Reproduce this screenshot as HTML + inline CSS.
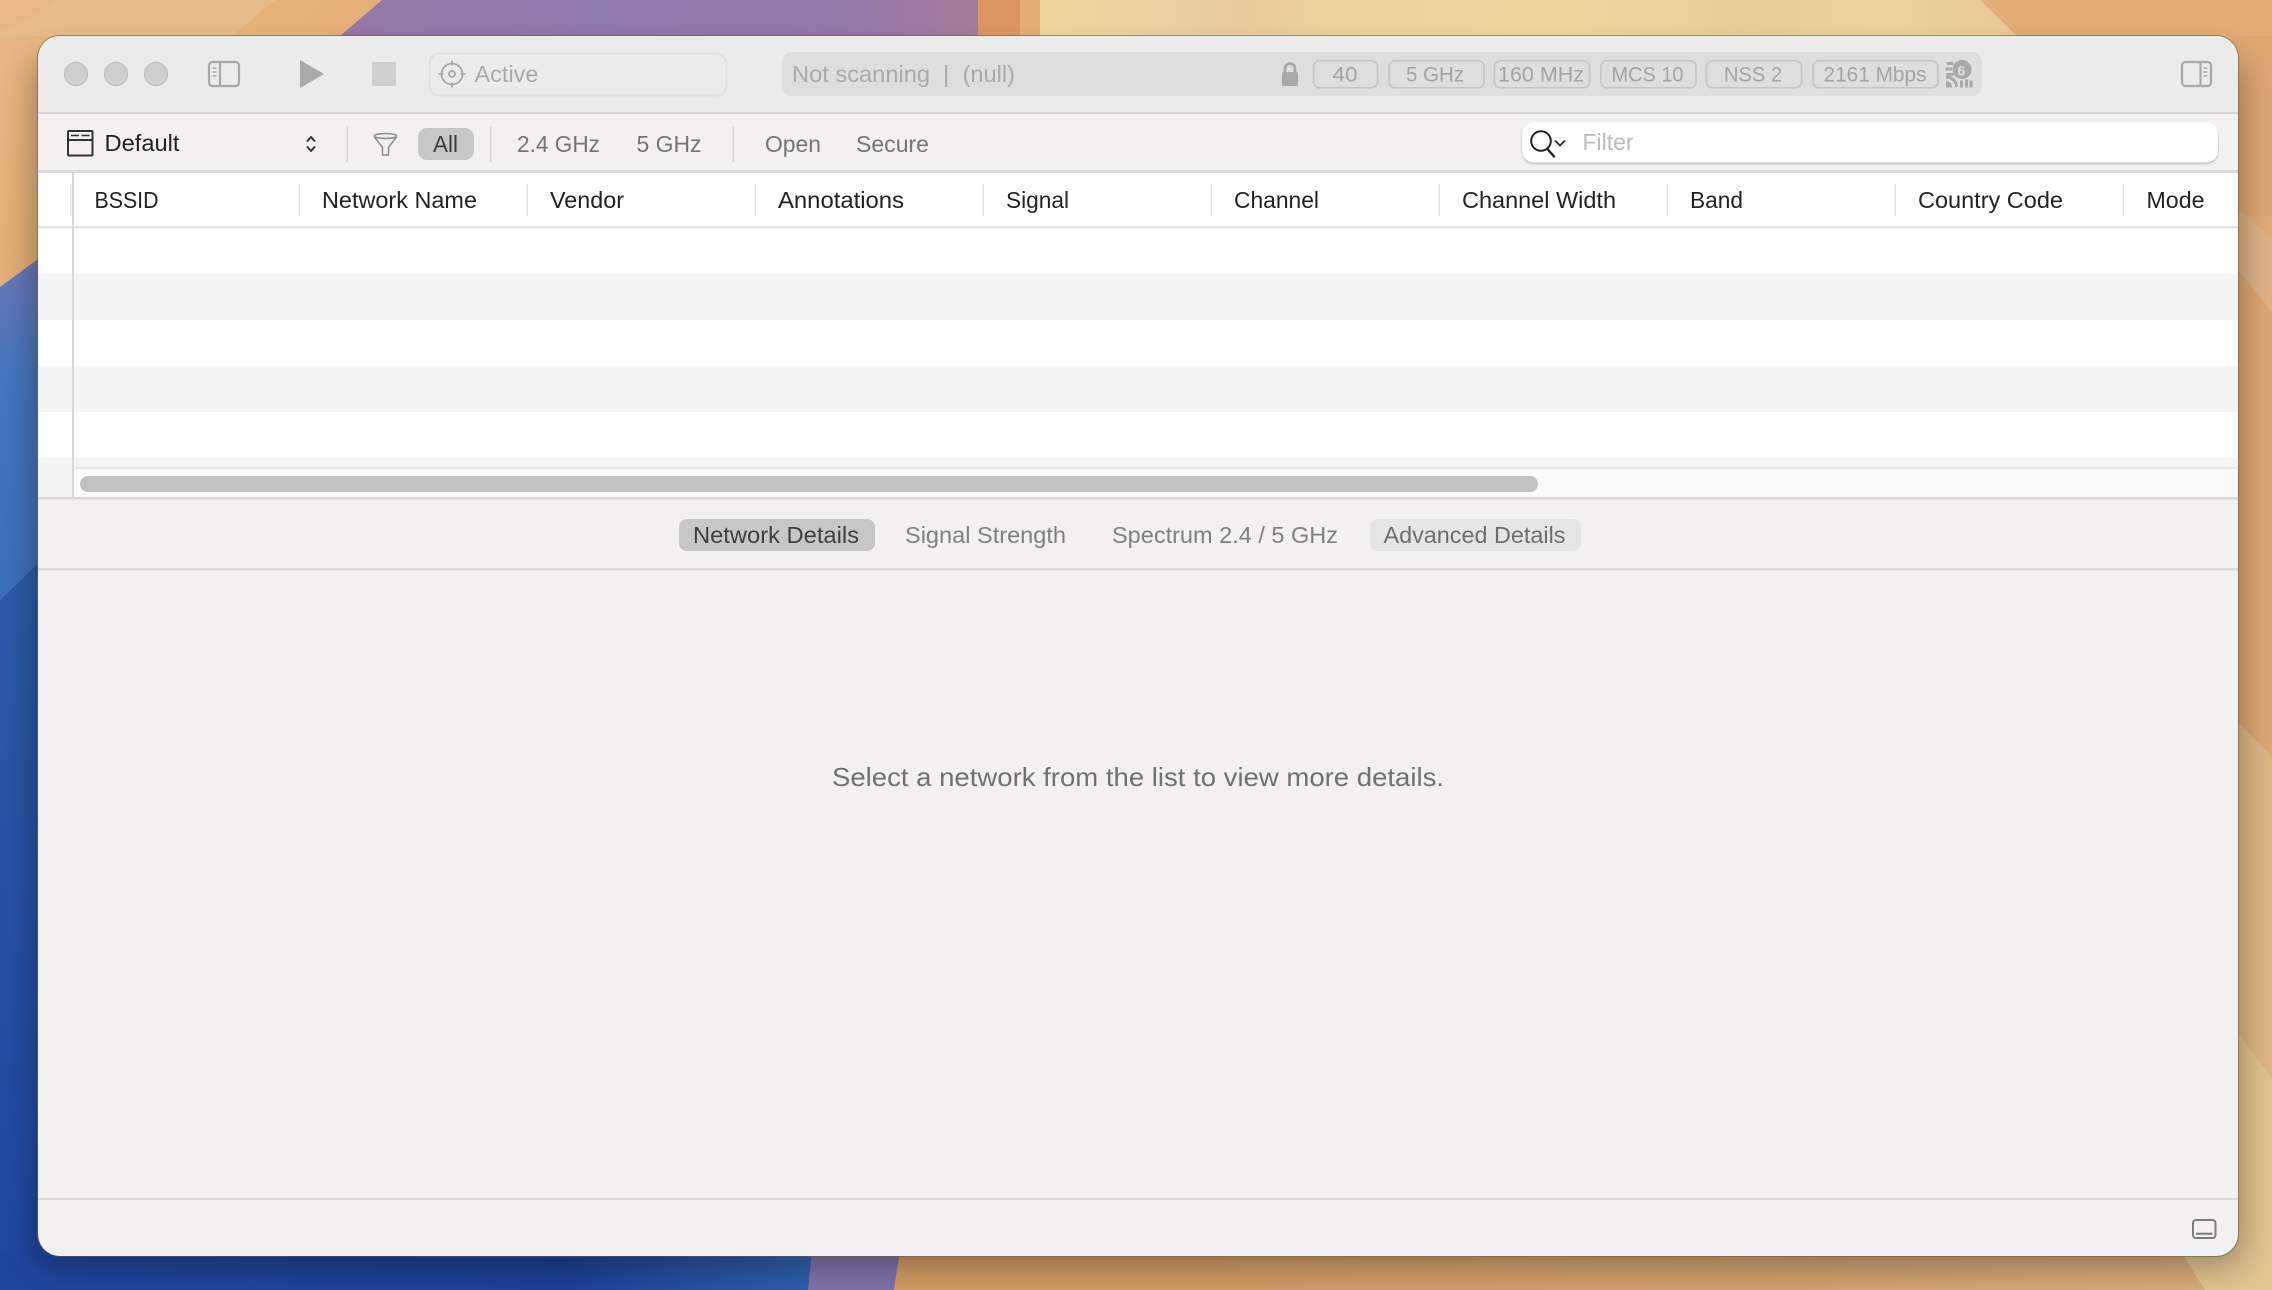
<!DOCTYPE html>
<html><head><meta charset="utf-8"><style>
html,body{margin:0;padding:0;width:2272px;height:1290px;overflow:hidden;background:#e3ad72}
svg{display:block}
text{font-family:"Liberation Sans",sans-serif;font-size:23px;fill:#222}
.g{fill:#757575}.d{fill:#aaa}.b{font-size:21.500px;fill:#a4a4a4}
</style></head><body>
<svg xmlns="http://www.w3.org/2000/svg" width="2272" height="1290" viewBox="0 0 2272 1290">
<defs>
<linearGradient id="o1" x1="0" y1="0" x2="1" y2="1"><stop offset="0" stop-color="#e9b983"/><stop offset="1" stop-color="#dfa56c"/></linearGradient>
<linearGradient id="bl1" x1="0" y1="0" x2="0" y2="1"><stop offset="0" stop-color="#6f78b6"/><stop offset=".35" stop-color="#4577be"/><stop offset="1" stop-color="#3c70bc"/></linearGradient>
<linearGradient id="bl2" x1="0" y1="0" x2="0" y2="1"><stop offset="0" stop-color="#2e5caa"/><stop offset="1" stop-color="#1e479f"/></linearGradient>
<linearGradient id="bl3" x1="0" y1="0" x2="1" y2="0"><stop offset="0" stop-color="#1f469f"/><stop offset=".7" stop-color="#1d4196"/><stop offset="1" stop-color="#2f60aa"/></linearGradient>
<linearGradient id="pu" x1="0" y1="0" x2="1" y2="0"><stop offset="0" stop-color="#9579a8"/><stop offset=".4" stop-color="#8d78ac"/><stop offset=".8" stop-color="#9378aa"/><stop offset="1" stop-color="#a67c98"/></linearGradient>
<linearGradient id="ye" x1="0" y1="0" x2="1" y2="0">
<stop offset="0" stop-color="#edd69c"/><stop offset=".13" stop-color="#ebd09f"/><stop offset=".2" stop-color="#e9ca9b"/><stop offset=".3" stop-color="#ecd29c"/><stop offset=".52" stop-color="#edd69c"/><stop offset=".7" stop-color="#e9cd99"/><stop offset=".85" stop-color="#ebd19c"/><stop offset="1" stop-color="#e8c892"/></linearGradient>
<linearGradient id="br" x1="0" y1="0" x2="1" y2="0"><stop offset="0" stop-color="#d39c65"/><stop offset=".55" stop-color="#d2a26f"/><stop offset="1" stop-color="#d8ad7c"/></linearGradient>
<filter id="sh" x="-5%" y="-5%" width="110%" height="110%"><feGaussianBlur stdDeviation="16"/></filter>
<filter id="fs" x="-5%" y="-20%" width="110%" height="140%"><feGaussianBlur stdDeviation="1"/></filter>
<clipPath id="win"><rect x="38" y="36" width="2200" height="1220" rx="22"/></clipPath>
</defs>

<!-- wallpaper -->
<rect width="2272" height="1290" fill="#e3ab72"/>
<polygon points="0,0 382,0 340,40 0,300" fill="url(#o1)"/>
<polygon points="58,0 275,0 232,36 0,36 0,33" fill="#e7bc88"/>
<polygon points="340,36 382,0 978,0 978,40" fill="url(#pu)"/>
<rect x="978" y="0" width="42" height="40" fill="#dc9662"/>
<rect x="1020" y="0" width="20" height="40" fill="#e4ae76"/>
<rect x="1040" y="0" width="1000" height="40" fill="url(#ye)"/>
<polygon points="1980,0 2272,0 2272,238 2232,210 2238,40 2021,40" fill="#e2ad76"/>
<rect x="2232" y="36" width="40" height="180" fill="#dfa873"/>
<polygon points="2232,205 2272,238 2272,312 2232,263" fill="#e0b386"/>
<polygon points="2232,263 2272,312 2272,757 2232,716" fill="#dfa873"/>
<polygon points="2232,716 2272,757 2272,1078 2232,1025" fill="#dfb787"/>
<polygon points="2232,1025 2272,1078 2272,1290 2232,1290" fill="#e3c490"/>
<polygon points="0,287 45,254 45,556 0,600" fill="url(#bl1)"/>
<polygon points="0,600 45,556 45,1290 0,1290" fill="url(#bl2)"/>
<rect x="0" y="1250" width="812" height="40" fill="url(#bl3)"/>
<polygon points="812,1250 900,1250 894,1290 808,1290" fill="#7f72a9"/>
<polygon points="900,1250 1220,1250 1220,1290 894,1290" fill="#d39c65"/>
<polygon points="1220,1250 2240,1250 2240,1290 1220,1290" fill="url(#br)"/>
<polygon points="2180,1250 2272,1250 2272,1290 2205,1290" fill="#e2c491"/>

<!-- window shadow -->
<rect x="32" y="56" width="2212" height="1212" rx="26" fill="#000" opacity=".3" filter="url(#sh)"/>
<rect x="37" y="35" width="2202" height="1222" rx="23" fill="#6d5f4d" opacity=".6"/>

<g clip-path="url(#win)">
<rect x="38" y="36" width="2200" height="1220" fill="#f2f0f1"/>
<rect x="38" y="36" width="2200" height="77" fill="#ebebeb"/>
<rect x="38" y="112" width="2200" height="2" fill="#d6d6d6"/>
<rect x="38" y="114" width="2200" height="57" fill="#f2f0f1"/>
<rect x="38" y="170" width="2200" height="3" fill="#dcdbdc"/>
<!-- table -->
<rect x="38" y="173" width="2200" height="325" fill="#fff"/>
<rect x="38" y="274" width="2200" height="46" fill="#f4f4f4"/>
<rect x="38" y="366" width="2200" height="46" fill="#f4f4f4"/>
<rect x="38" y="458" width="2200" height="40" fill="#f4f4f4"/>
<rect x="38" y="226" width="2200" height="2.5" fill="#e4e4e4"/>
<rect x="74" y="468" width="2164" height="30" fill="#fafafa"/>
<rect x="74" y="467" width="2164" height="2" fill="#e8e8e8"/>
<rect x="72" y="172" width="2" height="326" fill="#d8d8d8"/>
<rect x="80" y="476" width="1458" height="16" rx="8" fill="#c0c0c0"/>
<rect x="38" y="497" width="2200" height="2.5" fill="#dbdadb"/>
<rect x="38" y="568" width="2200" height="2.5" fill="#dbdadb"/>
<rect x="38" y="1198" width="2200" height="2" fill="#dcdbdc"/>
</g>

<!-- header dividers -->
<g fill="#e4e4e4">
<rect x="70" y="184" width="1.500" height="32"/><rect x="298.500" y="184" width="1.500" height="32"/><rect x="526.500" y="184" width="1.500" height="32"/><rect x="754.500" y="184" width="1.500" height="32"/><rect x="982.500" y="184" width="1.500" height="32"/><rect x="1210.500" y="184" width="1.500" height="32"/><rect x="1438.500" y="184" width="1.500" height="32"/><rect x="1666.500" y="184" width="1.500" height="32"/><rect x="1894.500" y="184" width="1.500" height="32"/><rect x="2122.500" y="184" width="1.500" height="32"/>
</g>
<text x="94.500" y="208" textLength="64" lengthAdjust="spacingAndGlyphs">BSSID</text>
<text x="322" y="208" textLength="155" lengthAdjust="spacingAndGlyphs">Network Name</text>
<text x="550" y="208" textLength="74" lengthAdjust="spacingAndGlyphs">Vendor</text>
<text x="778" y="208" textLength="126" lengthAdjust="spacingAndGlyphs">Annotations</text>
<text x="1006" y="208" textLength="63" lengthAdjust="spacingAndGlyphs">Signal</text>
<text x="1234" y="208" textLength="85" lengthAdjust="spacingAndGlyphs">Channel</text>
<text x="1462" y="208" textLength="154" lengthAdjust="spacingAndGlyphs">Channel Width</text>
<text x="1690" y="208" textLength="53" lengthAdjust="spacingAndGlyphs">Band</text>
<text x="1918" y="208" textLength="145" lengthAdjust="spacingAndGlyphs">Country Code</text>
<text x="2146.500" y="208" textLength="58" lengthAdjust="spacingAndGlyphs">Mode</text>

<!-- traffic lights -->
<g fill="#d0d0d0" stroke="#c0c0c0" stroke-width="1.200">
<circle cx="76" cy="74" r="11.600"/><circle cx="116" cy="74" r="11.600"/><circle cx="156" cy="74" r="11.600"/>
</g>
<!-- left sidebar toggle -->
<g fill="none" stroke="#a9a9a9" stroke-width="2.200">
<rect x="209" y="62" width="30" height="24" rx="3.500"/><path d="M220 62V86"/>
<path d="M212.500 68h4M212.500 72h4M212.500 76h4" stroke-width="1.600"/>
</g>
<!-- play, stop -->
<path d="M300 60 L324 74 L300 88Z" fill="#a9a9a9"/>
<rect x="372" y="62" width="24" height="24" fill="#cfcfcf"/>
<!-- active box -->
<rect x="429.500" y="53.500" width="297" height="42" rx="10" fill="#ebebeb" stroke="#e0e0e0" stroke-width="2"/>
<g fill="none" stroke="#a9a9a9" stroke-width="1.800">
<circle cx="452" cy="74" r="10.500"/><circle cx="452" cy="74" r="3"/>
<path d="M452 60.500v5M452 82.500v5M438.500 74h5M460.500 74h5"/>
</g>
<text class="d" x="474.500" y="82" textLength="64" lengthAdjust="spacingAndGlyphs">Active</text>

<!-- status pill -->
<rect x="782" y="52" width="1200" height="44" rx="10" fill="#dedede"/>
<text class="d" x="792" y="82" textLength="223" lengthAdjust="spacingAndGlyphs" xml:space="preserve">Not scanning  |  (null)</text>
<rect x="1282" y="72" width="16" height="14" rx="2" fill="#a9a9a9"/>
<path d="M1285 73v-4.500a5 5 0 0 1 10 0V73" fill="none" stroke="#a9a9a9" stroke-width="2.800"/>
<g fill="none" stroke="#c6c6c6" stroke-width="1.600">
<rect x="1313.500" y="60.800" width="64" height="27" rx="6"/>
<rect x="1389" y="60.800" width="95" height="27" rx="6"/>
<rect x="1494.500" y="60.800" width="95" height="27" rx="6"/>
<rect x="1601" y="60.800" width="95" height="27" rx="6"/>
<rect x="1706.500" y="60.800" width="95" height="27" rx="6"/>
<rect x="1813" y="60.800" width="125" height="27" rx="6"/>
</g>
<text class="b" x="1332.500" y="81.500" textLength="25" lengthAdjust="spacingAndGlyphs">40</text>
<text class="b" x="1406" y="81.500" textLength="58" lengthAdjust="spacingAndGlyphs">5 GHz</text>
<text class="b" x="1498" y="81.500" textLength="86" lengthAdjust="spacingAndGlyphs">160 MHz</text>
<text class="b" x="1611.500" y="81.500" textLength="72" lengthAdjust="spacingAndGlyphs">MCS 10</text>
<text class="b" x="1724" y="81.500" textLength="58" lengthAdjust="spacingAndGlyphs">NSS 2</text>
<text class="b" x="1823.500" y="81.500" textLength="103" lengthAdjust="spacingAndGlyphs">2161 Mbps</text>
<!-- wifi 6 -->
<g fill="none" stroke="#a9a9a9" stroke-width="3">
<path d="M1946.500 63.500h7M1945.500 69h6.500M1946.500 74.500h7"/>
<path d="M1946 77a10 10 0 0 1 10.500 10"/>
<path d="M1961.500 87.500v-7M1966.500 87.500v-8M1971 87.500v-7" stroke-width="3"/>
</g>
<path d="M1946 81a6 6 0 0 1 6 6.500H1946Z" fill="#a9a9a9"/>
<circle cx="1962" cy="69.500" r="9.500" fill="#a9a9a9"/>
<text x="1957.500" y="75.500" style="font-size:14px;font-weight:bold;fill:#dedede">6</text>

<!-- right sidebar toggle -->
<g fill="none" stroke="#a9a9a9" stroke-width="2.200">
<rect x="2182" y="62" width="29" height="24" rx="3.500"/><path d="M2200.500 62V86"/>
<path d="M2203.500 68h4M2203.500 72h4M2203.500 76h4" stroke-width="1.600"/>
</g>

<!-- toolbar -->
<g fill="none" stroke="#333" stroke-width="2">
<rect x="68" y="131" width="24.500" height="24.500" rx="1"/><path d="M68 140h24.500"/>
<path d="M71 135.500h8M81.500 135.500h8" stroke-width="1.600"/>
</g>
<text x="104.500" y="151" textLength="75" lengthAdjust="spacingAndGlyphs">Default</text>
<path d="M307.500 141l3.500-4 3.500 4M307.500 147l3.500 4 3.500-4" fill="none" stroke="#333" stroke-width="2" stroke-linecap="round" stroke-linejoin="round"/>
<rect x="346.500" y="127" width="1.500" height="35" fill="#d5d5d5"/>
<rect x="490" y="127" width="1.500" height="35" fill="#d5d5d5"/>
<rect x="732.500" y="127" width="1.500" height="35" fill="#d5d5d5"/>
<g fill="none" stroke="#8a8a8a" stroke-width="1.500" stroke-linejoin="round">
<ellipse cx="385.500" cy="136" rx="11.200" ry="2.500"/>
<path d="M374.500 137L382.500 147.500V155H388.500V147.500L396.500 137"/>
</g>
<rect x="418" y="128" width="56" height="32" rx="9" fill="#c8c7c8"/>
<text x="433" y="152" textLength="25" lengthAdjust="spacingAndGlyphs" style="fill:#3d3d3d">All</text>
<text class="g" x="517" y="152" textLength="83" lengthAdjust="spacingAndGlyphs">2.4 GHz</text>
<text class="g" x="636.500" y="152" textLength="65" lengthAdjust="spacingAndGlyphs">5 GHz</text>
<text class="g" x="765" y="152" textLength="56" lengthAdjust="spacingAndGlyphs">Open</text>
<text class="g" x="856" y="152" textLength="73" lengthAdjust="spacingAndGlyphs">Secure</text>

<!-- filter -->
<rect x="1522" y="124" width="696" height="40" rx="12" fill="#a0a0a0" opacity=".7" filter="url(#fs)"/>
<rect x="1522" y="122" width="696" height="40.500" rx="12" fill="#fff"/>
<circle cx="1541" cy="141" r="9.800" fill="none" stroke="#222" stroke-width="2"/>
<path d="M1547.500 149l6.500 7.500" stroke="#222" stroke-width="2.400" stroke-linecap="round"/>
<path d="M1555.500 141l4.500 4.500 4.500-4.500" fill="none" stroke="#222" stroke-width="1.700" stroke-linecap="round" stroke-linejoin="round"/>
<text x="1582.500" y="150" textLength="51" lengthAdjust="spacingAndGlyphs" style="fill:#bbb">Filter</text>

<!-- tabs -->
<rect x="679" y="519" width="196" height="32" rx="8" fill="#c8c7c8"/>
<rect x="1370" y="519" width="211" height="32" rx="8" fill="#e6e5e6"/>
<text x="693" y="543" textLength="166" lengthAdjust="spacingAndGlyphs" style="fill:#3f3f3f">Network Details</text>
<text class="g" x="905" y="543" textLength="161" lengthAdjust="spacingAndGlyphs" style="fill:#808080">Signal Strength</text>
<text class="g" x="1112" y="543" textLength="226" lengthAdjust="spacingAndGlyphs" style="fill:#808080">Spectrum 2.4 / 5 GHz</text>
<text class="g" x="1383.500" y="543" textLength="182" lengthAdjust="spacingAndGlyphs" style="fill:#6e6e6e">Advanced Details</text>

<!-- message -->
<text x="832" y="786" textLength="612" lengthAdjust="spacingAndGlyphs" style="font-size:26px;fill:#717171">Select a network from the list to view more details.</text>

<!-- bottom icon -->
<rect x="2193" y="1220" width="22.500" height="18" rx="3" fill="none" stroke="#7c7c7c" stroke-width="2"/>
<path d="M2196 1233.800h16.500" stroke="#7c7c7c" stroke-width="2"/>
</svg>
</body></html>
